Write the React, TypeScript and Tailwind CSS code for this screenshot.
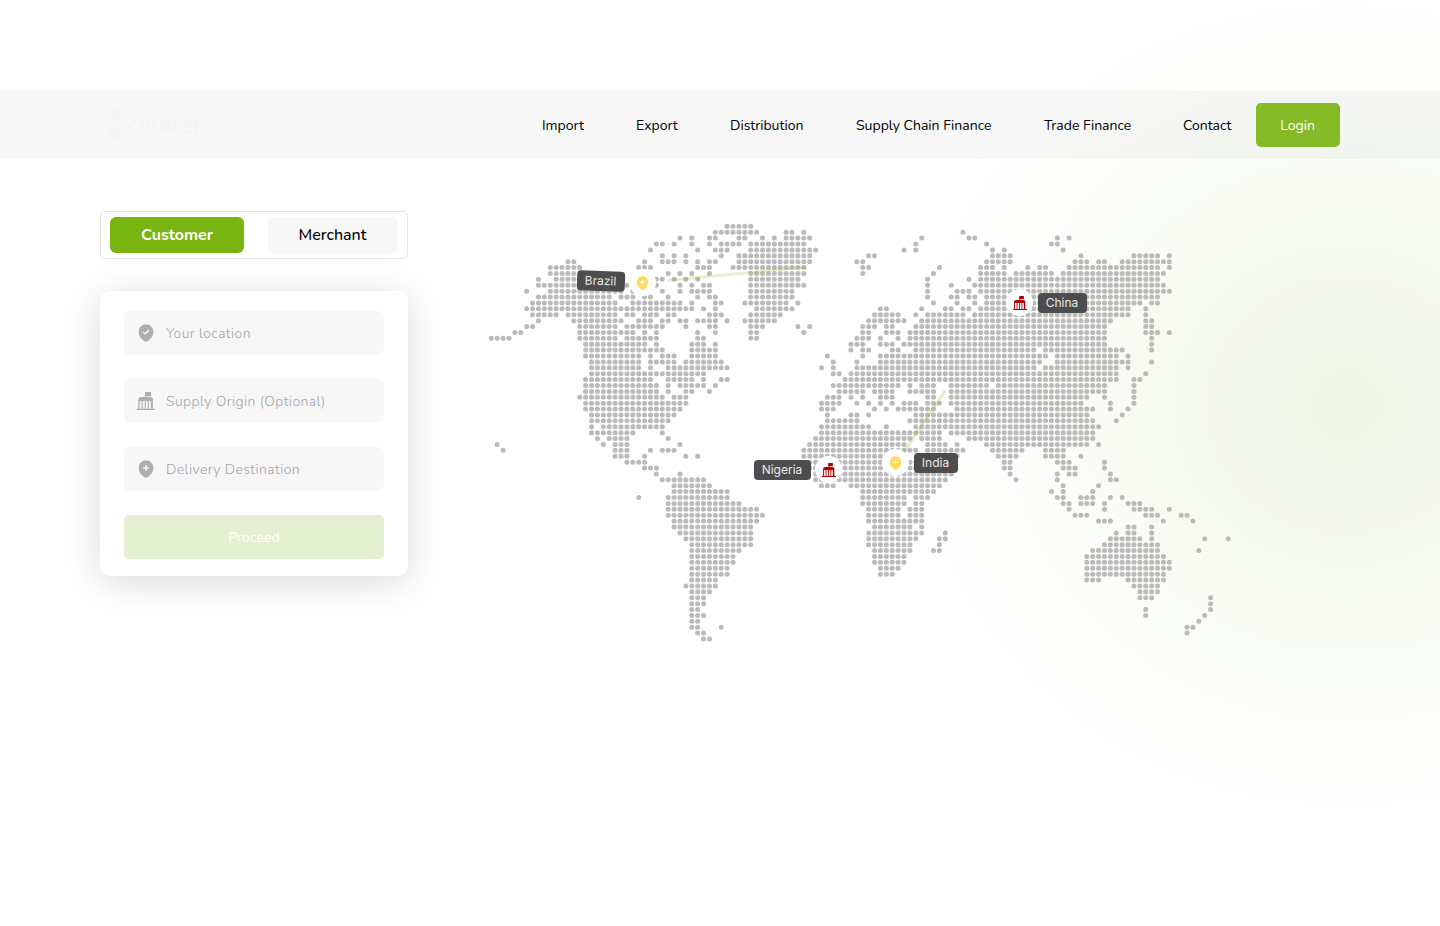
import React from "react";

const ROWS: string[] = [
  "40-44",
  "38-45 50-51 53 80",
  "32 34 37-38 42-43 46 48 50-54 73 81-82 96 98",
  "28-29 31 34 37 39-42 44-53 72 84 95-96",
  "27 35 38-40 44-55 70 72 85 87 97",
  "29 31 33 39 42-54 64-65 85-88 100 109-113 115",
  "13-14 26 29-31 33 35 37-38 42-54 62-63 84-88 99-101 103-104 107-115",
  "10-15 25-27 35-37 41-53 63-64 76 83-85 87 91 93-94 98-113 115",
  "10-14 30 32 34 37 44-53 63 75 83-87 89-95 97-114",
  "8 11-16 28-29 31 33 35 44-52 74 81 83-113",
  "8-16 23 28 32 34 36-37 44-53 74 78 82-114",
  "6 10-22 24 29 32 34-37 44-51 74 79-81 83-115",
  "8-20 22-24 26-27 30 35 37-38 44-51 74 78-79 81-82 84-113",
  "7-21 24-32 34 38-39 43-50 52 75 79 82 84-110 112-113",
  "6-34 36 38 45-51 66-67 73 77-78 80-81 83-108 111",
  "7-11 13-21 23-24 26-28 30-31 37-39 44-49 65-69 72 74-80 82-108 111",
  "8 14-22 25-27 29-30 32-33 35-38 40 43-48 64-70 73-105 111-112",
  "6-7 15-21 23-29 33 37-38 44-46 52 54 63-65 67-68 72-104 111-112",
  "4-5 15-24 26 28 35 38 44-45 53 63-64 67-69 71-104 111-113 115",
  "0-3 15-21 23-28 35-36 44-45 62-64 66 69 71-104 112",
  "16-26 28 34-36 38 61-63 66-68 70-104 112",
  "16-29 34-38 61 63-64 68-69 72-92 94-107 112",
  "16-25 27 29-31 34-38 57 63 66-94 96-106 108",
  "17-25 27-31 33-39 58 62 66-93 96-108 112",
  "17-25 27 30-40 56 58 62-92 94-106 108",
  "17-36 58-59 61-106 111",
  "16-27 30-34 36 39-40 60-106 109-110",
  "16-28 30 32-36 38 58-69 71 73-75 78-84 86-104 109",
  "16-28 30 33-34 37 59-63 65-68 71-75 78-104 109",
  "15-29 31-33 57-59 61 63 66-68 74-75 78-101 104 109",
  "16-33 56-59 62 64 66 68 70-72 74-76 78-100 105 109",
  "16-32 56-58 65 67 69-75 79-102 105 108",
  "17-31 57 61-62 64 72-101 107",
  "17-30 57-62 71-102 106",
  "17 19-29 56-64 67 72-103",
  "17-24 29 56-76 78-102",
  "18 20-23 30 55-71 73-76 81-102",
  "1 19 21-23 32 54-70 74-77 79 84-101 103",
  "2 21-23 27 29-31 53-72 74-80 85-90 94-97",
  "21-23 26 33 35 53-70 73-79 86-89 94-97 100",
  "23-26 54-78 87-88 96-98 104",
  "26-28 54-78 87-88 97-99 104",
  "28 32 55-78 88 96 98-99 105",
  "29-36 55-77 89 96 105-106",
  "31-37 56-58 61-76 97 103",
  "31-40 63-75 95 97 102",
  "25 30-40 63-70 72-74 96-97 100-102 105 107",
  "30-42 63-70 72-73 97-98 100-102 104 108-110",
  "30-45 64-69 71-73 98 104 109-112 115",
  "30-46 64-69 71-73 99-101 111-113 117-118",
  "31-45 64-73 103-105 114 119",
  "31-44 65-71 73 108-109 112",
  "32-44 64-73 77 106 108-109 112",
  "33-44 64-72 76-77 105-110 112 121 125",
  "34-44 64-71 76 104-113",
  "34-42 65-71 75-76 102-113 120",
  "34-41 65-70 101-114",
  "34-41 65-70 101-115",
  "34-40 66-69 101-115",
  "34-40 66-68 101-114",
  "34-38 101-103 108-114",
  "33-38 109-113",
  "34-37 110-113",
  "34-36 110-112 122",
  "34-36 122",
  "34-35 111 122",
  "34-36 111 121",
  "34-35 120",
  "34-35 39 118-119",
  "35-36 118",
  "36-37",
];

const PITCH = 5.896;

const DOTS = ROWS.flatMap((row, r) =>
  row.split(" ").flatMap((part) => {
    const [from, to = from] = part.split("-").map(Number);
    return Array.from({ length: to - from + 1 }, (_, i) => ({
      x: 11.3 + (from + i) * PITCH,
      y: 6.3 + r * PITCH,
    }));
  }),
);

function Pin({ className, mark }: { className: string; mark: "check" | "plus" }) {
  return (
    <svg viewBox="0 0 16 18" className={className} fill="none">
      <path
        d="M8 .3C4.600.3.600 3 .600 8c0 4.200 3.200 7.400 5.400 9 1.300.9 2.700.9 4 0 2.200-1.600 5.400-4.800 5.400-9C15.400 3 11.400.3 8 .3Z"
        fill="currentColor"
      />
      {mark === "check" ? (
        <path d="m5.600 8.400 1.600 1.500 3.400-3.400" stroke="#fff" strokeWidth="1.300" strokeLinecap="round" strokeLinejoin="round" />
      ) : (
        <path d="M8 5.400v5M5.500 7.900h5" stroke="#fff" strokeWidth="1.300" strokeLinecap="round" />
      )}
    </svg>
  );
}

function Building({ className }: { className: string }) {
  return (
    <svg viewBox="0 0 18 18" className={className} fill="currentColor">
      <path d="M8 0h6v4.200H9.200V5H13c1.800 0 2.900 1 2.900 2.600V16.800H18V18H0v-1.200h1.400V7.600C1.400 6 2.500 5 4.300 5H8ZM2.700 9v7.800h1.900V9Zm3.100 0v7.800h1.900V9Zm3.100 0v7.800h1.900V9Zm3.100 0v7.800h1.900V9Z" fillRule="evenodd" />
    </svg>
  );
}

const NAV = [
  { label: "Import", box: "w-[42px]" },
  { label: "Export", box: "w-[42px]" },
  { label: "Distribution", box: "w-[74px]" },
  { label: "Supply Chain Finance", box: "w-[136px]" },
  { label: "Trade Finance", box: "w-[87px]" },
  { label: "Contact", box: "w-[49px]" },
];

function Logo() {
  return (
    <div className="flex h-[44px] w-[110px] items-center text-[#f3f4f3]">
      <svg viewBox="0 0 28 44" className="h-[44px] w-[28px] shrink-0" fill="#f5f6f3">
        <path d="M26 3C13 0 1 6 1 18c0 10 8 20 22 24-6-8-8-13-8-19 0-8 4-12 10-14 2-2 2-4 1-6Z" />
      </svg>
      <span className="-ml-[5px] font-['Noto_Sans',sans-serif] text-[22.500px] font-semibold leading-none">clearer</span>
      <span className="mb-2 font-['Noto_Sans',sans-serif] text-[7px]">™</span>
    </div>
  );
}

function Header() {
  return (
    <header className="flex h-[68px] items-center bg-black/[0.03] pl-[104px] pr-[100px]">
      <Logo />
      <nav className="ml-auto flex items-center gap-[52px] text-[14px] text-black">
        {NAV.map((item) => (
          <a key={item.label} className={`${item.box} whitespace-nowrap`}>
            {item.label}
          </a>
        ))}
      </nav>
      <button className="ml-6 h-[44px] w-[84px] rounded-[5px] bg-[#84bb27] pr-px text-[14px] text-white">Login</button>
    </header>
  );
}

function Field({ icon, label }: { icon: React.ReactNode; label: string }) {
  return (
    <div className="flex h-[44px] items-center rounded-[6px] bg-[#f7f7f7] pl-[13px] text-[#aeaeb2]">
      <span className="flex w-[18px] justify-center">{icon}</span>
      <span className="ml-[11px] whitespace-nowrap text-[14px] font-light tracking-[0.420px] text-[#a3a3a5]">{label}</span>
    </div>
  );
}

function RequestForm() {
  return (
    <section className="w-[308px] shrink-0">
      <div className="flex h-[48px] items-center justify-between rounded-[5px] border border-[#e5e5e5] bg-white px-[9px] text-[16px]">
        <button className="h-[36px] w-[134px] rounded-[6px] bg-[#79b510] font-bold text-white">Customer</button>
        <button className="h-[36px] w-[130px] rounded-[6px] bg-[#f7f7f7] pr-px font-medium text-black">Merchant</button>
      </div>
      <div className="mt-8 flex h-[285px] flex-col gap-6 rounded-[10px] bg-white px-6 pt-5 shadow-[0_6px_36px_rgba(0,0,0,0.15)]">
        <Field icon={<Pin mark="check" className="h-[18px] w-[16px]" />} label="Your location" />
        <Field icon={<Building className="h-[18px] w-[18px]" />} label="Supply Origin (Optional)" />
        <Field icon={<Pin mark="plus" className="h-[18px] w-[16px]" />} label="Delivery Destination" />
        <button className="h-[44px] rounded-[5px] bg-[#e4f0d0] text-[14px] tracking-[0.1px] text-white">Proceed</button>
      </div>
    </section>
  );
}

const PLACES = [
  { name: "Brazil", kind: "pin", spot: "left-[149px] top-[49px]", tag: "left-[96.500px] top-[51px] w-[48px] rotate-[2deg] pb-px" },
  { name: "China", kind: "building", spot: "left-[526px] top-[69px]", tag: "left-[558px] top-[72.500px] w-[49px]" },
  { name: "Nigeria", kind: "building", spot: "left-[335px] top-[236px]", tag: "left-[274px] top-[240px] w-[57px] pb-px" },
  { name: "India", kind: "pin", spot: "left-[402px] top-[229px]", tag: "left-[434px] top-[233px] w-[44px] pb-px" },
];

function WorldMap() {
  return (
    <section className="relative h-[430px] w-[760px] shrink-0">
      <svg viewBox="0 0 760 430" className="h-[430px] w-[760px]">
        {DOTS.map((dot, i) => (
          <circle key={i} cx={dot.x} cy={dot.y} r="2.500" fill="#bababa" />
        ))}
        <path d="M187 60.500 326 47" stroke="#84bb27" strokeOpacity="0.22" strokeWidth="3" />
        <path d="M421.500 235.500 465 171" stroke="#84bb27" strokeOpacity="0.25" strokeWidth="3" />
      </svg>
      {PLACES.map((place) => (
        <React.Fragment key={place.name}>
          <span className={`absolute flex size-[27px] items-center justify-center rounded-full bg-white ${place.spot}`}>
            {place.kind === "pin" ? (
              <Pin mark="plus" className="h-[14px] w-[13px] text-[#ffdb5b]" />
            ) : (
              <Building className="h-[14px] w-[14px] text-[#b00000]" />
            )}
          </span>
          <span
            className={`absolute flex h-[20px] items-center justify-center rounded-[4px] bg-[#4d4d4d] pr-px font-['Inter',sans-serif] text-[12px] text-[#e8e8e8] ${place.tag}`}
          >
            {place.name}
          </span>
        </React.Fragment>
      ))}
    </section>
  );
}

export default function App() {
  return (
    <div className="h-[926px] w-[1440px] overflow-hidden bg-white bg-[radial-gradient(ellipse_470px_440px_at_1345px_405px,#f2f6e6_0%,#f3f7e9_24%,#f7faf1_42%,#fbfdf8_62%,#fefefd_80%,#ffffff_100%)] pt-[91px] font-['Nunito',sans-serif]">
      <Header />
      <main className="flex gap-[72px] pl-[100px] pt-[52px]">
        <RequestForm />
        <div className="pt-[9px]">
          <WorldMap />
        </div>
      </main>
    </div>
  );
}
